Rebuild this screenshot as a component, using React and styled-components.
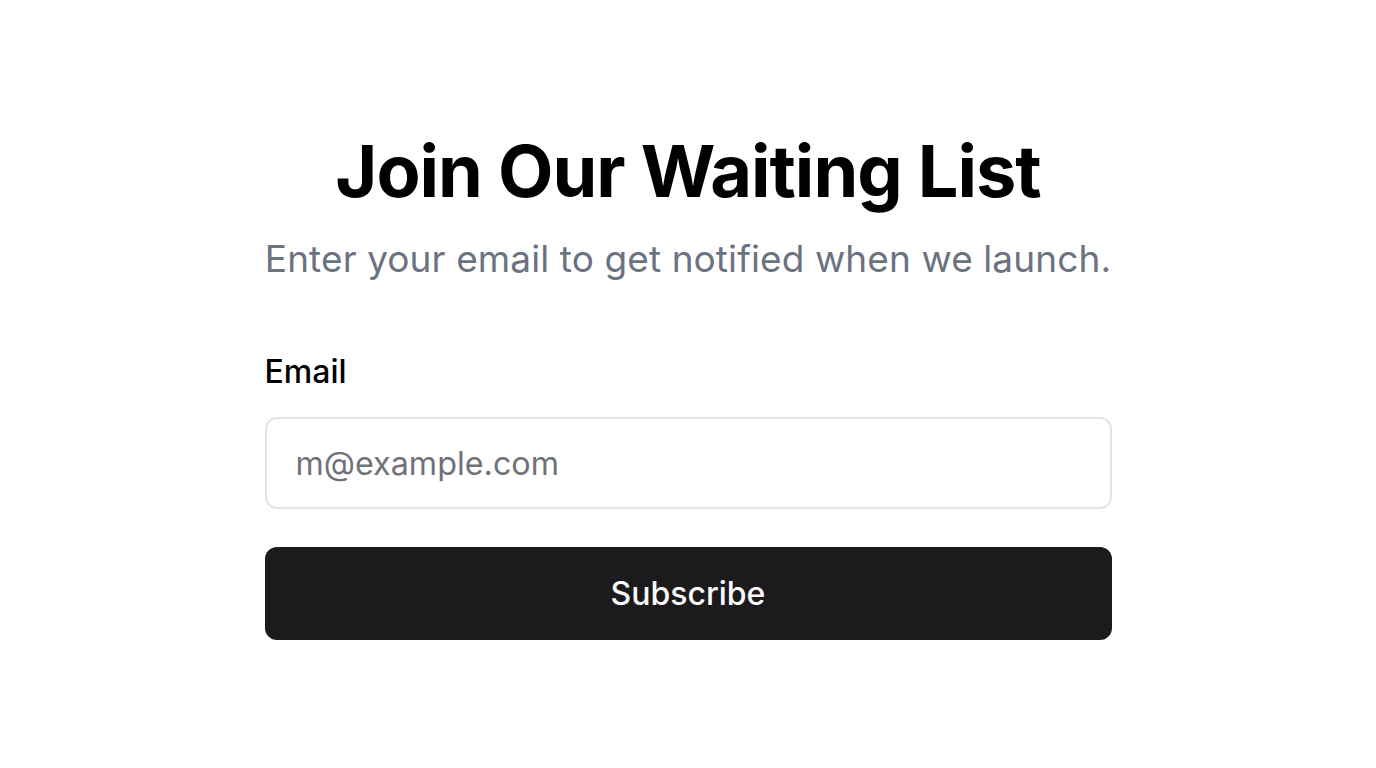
import React from 'react';
import styled, { createGlobalStyle } from 'styled-components';

const GlobalStyle = createGlobalStyle`
  html, body {
    margin: 0;
    padding: 0;
    background: #ffffff;
    font-family: Inter, 'Noto Sans', sans-serif;
  }
`;

const Page = styled.main`
  min-height: 100vh;
  display: flex;
  align-items: center;
  justify-content: center;
`;

const Card = styled.div`
  width: 847px;
  display: flex;
  flex-direction: column;
  padding-top: 3px;
`;

const Header = styled.div`
  display: flex;
  flex-direction: column;
  align-items: center;
  text-align: center;
  margin-bottom: 65px;
`;

const Title = styled.h1`
  margin: 0;
  font-size: 72px;
  line-height: 80px;
  font-weight: 700;
  color: #000000;
  letter-spacing: -1px;
`;

const Subtitle = styled.p`
  margin: 20px 0 0;
  font-size: 37px;
  line-height: 56px;
  color: #6b7280;
  letter-spacing: 0.1px;
  white-space: nowrap;
`;

const Form = styled.form`
  display: flex;
  flex-direction: column;
`;

const Label = styled.label`
  font-size: 32px;
  line-height: 40px;
  font-weight: 500;
  color: #000000;
  margin-bottom: 25px;
`;

const Input = styled.input`
  box-sizing: border-box;
  width: 100%;
  height: 92px;
  padding: 0 29px;
  border: 2px solid #e4e4e7;
  border-radius: 12px;
  font-family: inherit;
  font-size: 32.3px;
  color: #111;
  outline: none;
  &::placeholder {
    color: #71717a;
  }
`;

const Button = styled.button`
  margin-top: 38px;
  height: 93px;
  width: 100%;
  border: none;
  border-radius: 12px;
  background: #1b1b1d;
  color: #fafafa;
  font-family: inherit;
  font-size: 32px;
  font-weight: 500;
  cursor: pointer;
`;

const App = () => {
  const [email, setEmail] = React.useState('');
  return (
    <Page>
      <GlobalStyle />
      <Card>
        <Header>
          <Title>Join Our Waiting List</Title>
          <Subtitle>Enter your email to get notified when we launch.</Subtitle>
        </Header>
        <Form onSubmit={(e) => e.preventDefault()}>
          <Label htmlFor="email">Email</Label>
          <Input
            id="email"
            type="email"
            placeholder="m@example.com"
            value={email}
            onChange={(e) => setEmail(e.target.value)}
          />
          <Button type="submit">Subscribe</Button>
        </Form>
      </Card>
    </Page>
  );
};

export default App;
